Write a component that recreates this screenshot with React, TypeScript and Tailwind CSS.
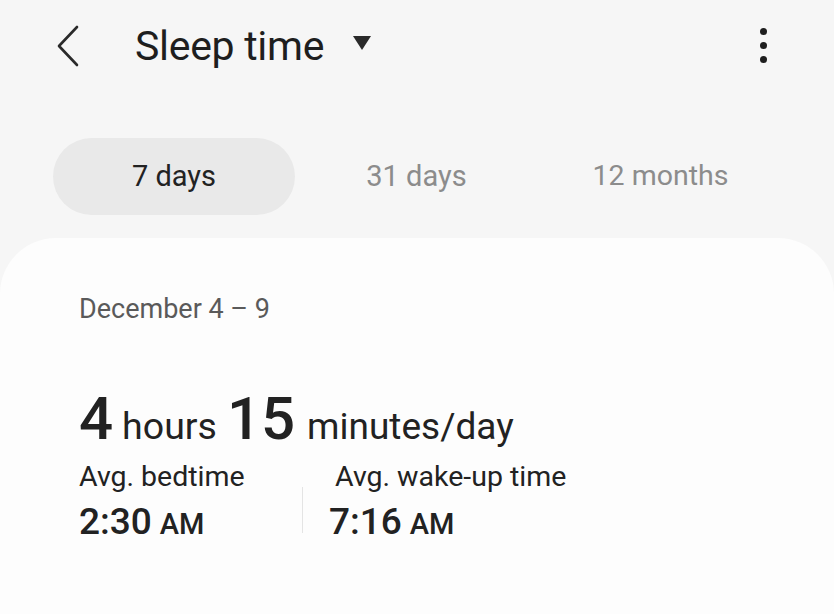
export default function App() {
  return (
    <div className="flex h-[614px] w-[834px] flex-col overflow-hidden bg-[#f6f6f6] font-['Roboto',sans-serif] text-[#222]">
      {/* top bar */}
      <div className="flex h-[94px] items-center pl-[55px] pr-[67px] pb-[2px]">
        <svg width="26" height="42" viewBox="0 0 26 42" className="mr-[54px]">
          <path d="M22 2 L4 21 L22 40" fill="none" stroke="#2a2a2a" strokeWidth="2.6" strokeLinecap="round" strokeLinejoin="round" />
        </svg>
        <span className="text-[41px] leading-none tracking-[-0.3px] text-[#1e1e1e]">Sleep time</span>
        <svg width="20" height="16" viewBox="0 0 20 16" className="ml-[28px] mb-[6px]">
          <path d="M1 1 H19 L10 15 Z" fill="#2a2a2a" />
        </svg>
        <div className="ml-auto flex flex-col items-center gap-[7px] pb-[2px]">
          <span className="h-[7px] w-[7px] rounded-full bg-[#1e1e1e]" />
          <span className="h-[7px] w-[7px] rounded-full bg-[#1e1e1e]" />
          <span className="h-[7px] w-[7px] rounded-full bg-[#1e1e1e]" />
        </div>
      </div>

      {/* period tabs */}
      <div className="mt-[44px] flex items-center pl-[53px]">
        <div className="flex h-[77px] w-[242px] items-center justify-center rounded-full bg-[#e9e9e9] text-[29px] text-[#222]">
          7 days
        </div>
        <div className="flex w-[243px] justify-center text-[29px] text-[#8c8c8c]">31 days</div>
        <div className="flex w-[243px] justify-center pl-[2px] text-[28.5px] text-[#8c8c8c]">12 months</div>
      </div>

      {/* summary card */}
      <div className="mt-[23px] flex-1 rounded-t-[56px] bg-[#fdfdfd] px-[79px] pt-[58px]">
        <div className="text-[27px] leading-none text-[#5a5a5a]">December 4 – 9</div>

        <div className="mt-[66px] flex items-baseline leading-none text-[#222]">
          <span className="text-[60px] font-medium">4</span>
          <span className="ml-[9px] text-[37.5px]">hours</span>
          <span className="ml-[10px] text-[60px] font-medium">15</span>
          <span className="ml-[12px] text-[37px]">minutes/day</span>
        </div>

        <div className="mt-[14px] flex">
          <div className="w-[223px]">
            <div className="text-[28.5px] leading-none">Avg. bedtime</div>
            <div className="mt-[11px] flex items-baseline leading-none">
              <span className="text-[37px] font-medium">2:30</span>
              <span className="ml-[8px] text-[29px] font-medium">AM</span>
            </div>
          </div>
          <div className="mt-[24px] h-[46px] w-px bg-[#e4e4e4]" />
          <div className="pl-[26px]">
            <div className="ml-[6px] text-[28.5px] leading-none">Avg. wake-up time</div>
            <div className="mt-[11px] flex items-baseline leading-none">
              <span className="text-[37px] font-medium">7:16</span>
              <span className="ml-[8px] text-[29px] font-medium">AM</span>
            </div>
          </div>
        </div>
      </div>
    </div>
  )
}
